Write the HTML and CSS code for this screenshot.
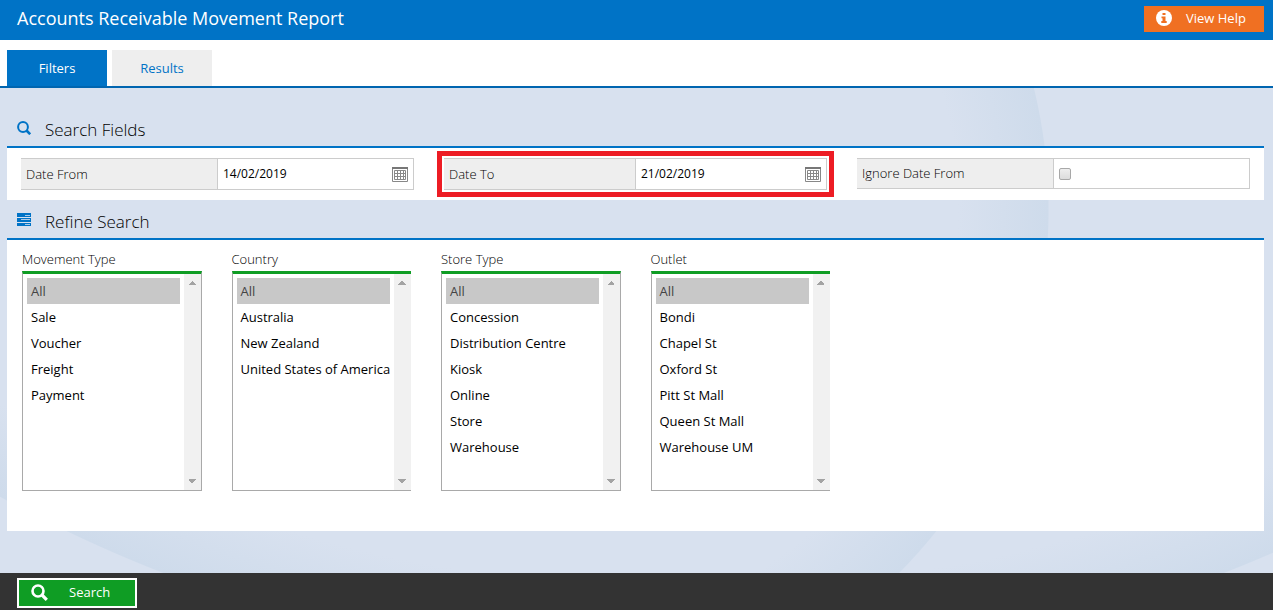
FILE: index.html
```html
<!DOCTYPE html>
<html lang="en">
    <head>
        <meta charset="UTF-8">
        <meta name="viewport" content="width=device-width, initial-scale=1.0">
        <link rel="stylesheet" href="styles.css">
        <title>Accounts Receivable Movement Report</title>
    </head>
    <body>

        <header class="title-bar">
            <h1>Accounts Receivable Movement Report</h1>
            <button type="button" class="help-btn">
                <svg width="16" height="16" viewBox="0 0 16 16"><circle cx="8" cy="8" r="8" fill="#fff"/><path d="M6.5 3h3v2h-3zM5.5 6.5h4v4.5h1.2v2H5.3v-2h1.2V8.200h-1z" fill="#f07022"/></svg>
                <span>View Help</span>
            </button>
        </header>

        <nav class="tabs">
            <a href="#filters" class="tab active">Filters</a>
            <a href="#results" class="tab">Results</a>
        </nav>

        <main id="filters">
            <form id="reportForm">
                <h2>
                    <svg width="14" height="14" viewBox="0 0 14 14" fill="none" stroke="#0073c6"><circle cx="6" cy="6" r="4.900" stroke-width="2"/><path d="M9.500 9.500L13.200 13.200" stroke-width="2.600"/></svg>
                    Search Fields
                </h2>
                <div class="panel fields">
                    <div class="field">
                        <label for="dateFrom">Date From</label>
                        <div class="value">
                            <input type="text" id="dateFrom" name="dateFrom" value="14/02/2019">
                            <button type="button" class="calendar" aria-label="Pick date from">
                                <svg width="16" height="15" viewBox="0 0 16 15"><path d="M.5.5h15v14H.5z" fill="#fff" stroke="#888"/><path d="M0 0h16v2H0z" fill="#777"/><path d="M2.500 3.500h11v9h-11zM5.500 3v10M8.500 3v10M11.500 3v10M2 6.500h12M2 9.500h12" fill="none" stroke="#888"/></svg>
                            </button>
                        </div>
                    </div>
                    <div class="field highlight">
                        <label for="dateTo">Date To</label>
                        <div class="value">
                            <input type="text" id="dateTo" name="dateTo" value="21/02/2019">
                            <button type="button" class="calendar" aria-label="Pick date to">
                                <svg width="16" height="15" viewBox="0 0 16 15"><path d="M.5.5h15v14H.5z" fill="#fff" stroke="#888"/><path d="M0 0h16v2H0z" fill="#777"/><path d="M2.500 3.500h11v9h-11zM5.500 3v10M8.500 3v10M11.500 3v10M2 6.500h12M2 9.500h12" fill="none" stroke="#888"/></svg>
                            </button>
                        </div>
                    </div>
                    <div class="field short">
                        <label for="ignoreDate">Ignore Date From</label>
                        <div class="value">
                            <input type="checkbox" id="ignoreDate" name="ignoreDate">
                        </div>
                    </div>
                </div>

                <h2>
                    <svg width="14" height="14" viewBox="0 0 14 14"><path d="M0 0h14v4H0zM0 5h14v4H0zM0 10h14v3H0z" fill="#0073c6"/><path d="M8 2.500h5M4 6.500h9M8 11.500h5" stroke="#a9cbea"/></svg>
                    Refine Search
                </h2>
                <div class="panel refine">
                    <div class="list">
                        <label for="movementType">Movement Type</label>
                        <select id="movementType" name="movementType" multiple>
                            <option selected>All</option>
                            <option>Sale</option>
                            <option>Voucher</option>
                            <option>Freight</option>
                            <option>Payment</option>
                        </select>
                    </div>
                    <div class="list">
                        <label for="country">Country</label>
                        <select id="country" name="country" multiple>
                            <option selected>All</option>
                            <option>Australia</option>
                            <option>New Zealand</option>
                            <option>United States of America</option>
                        </select>
                    </div>
                    <div class="list">
                        <label for="storeType">Store Type</label>
                        <select id="storeType" name="storeType" multiple>
                            <option selected>All</option>
                            <option>Concession</option>
                            <option>Distribution Centre</option>
                            <option>Kiosk</option>
                            <option>Online</option>
                            <option>Store</option>
                            <option>Warehouse</option>
                        </select>
                    </div>
                    <div class="list">
                        <label for="outlet">Outlet</label>
                        <select id="outlet" name="outlet" multiple>
                            <option selected>All</option>
                            <option>Bondi</option>
                            <option>Chapel St</option>
                            <option>Oxford St</option>
                            <option>Pitt St Mall</option>
                            <option>Queen St Mall</option>
                            <option>Warehouse UM</option>
                        </select>
                    </div>
                </div>
            </form>
        </main>

        <footer class="action-bar">
            <button type="submit" form="reportForm" class="search-btn">
                <svg width="17" height="17" viewBox="0 0 17 17" fill="none" stroke="#fff"><circle cx="7" cy="7" r="5.500" stroke-width="2.600"/><path d="M11 11l4.800 4.800" stroke-width="3.200"/></svg>
                <span>Search</span>
            </button>
        </footer>

    </body>
</html>
```

FILE: styles.css
```css
* {
    box-sizing: border-box;
}

body {
    font-family: 'Open Sans', 'Liberation Sans', sans-serif;
    font-size: 13px;
    color: #000;
    margin: 0;
    min-height: 100vh;
    display: flex;
    flex-direction: column;
}

button,
input,
select {
    font: inherit;
    color: inherit;
}

.title-bar {
    background: #0073c6;
    color: white;
    height: 40px;
    padding: 0 9px 0 17px;
    display: flex;
    align-items: center;
    justify-content: space-between;
}

h1 {
    font-size: 18px;
    font-weight: 400;
    line-height: 24px;
    margin: 0;
    padding-bottom: 4px;
}

.help-btn {
    background: #f07022;
    color: white;
    width: 120px;
    height: 26px;
    margin-top: -2px;
    padding: 0 12px 2px;
    border: none;
    display: flex;
    align-items: center;
    gap: 14px;
    white-space: nowrap;
    cursor: pointer;
}

.tabs {
    display: flex;
    gap: 5px;
    padding: 10px 7px 0;
    background: #fff;
    border-bottom: 2px solid #0065b0;
}

.tab {
    width: 100px;
    line-height: 36px;
    text-align: center;
    text-decoration: none;
    background: #eee;
    color: #0073c6;
}

.tab.active {
    background: #0073c6;
    color: white;
}

/* soft arcs behind the panels */
main {
    flex: 1;
    padding: 24px 9px 42px 7px;
    background:
        radial-gradient(circle 1372px at 89px -793px, rgba(206, 219, 235, 0) 1290px, #cedbeb 1371px, rgba(206, 219, 235, 0) 1372px) right top / 50% 100% no-repeat,
        radial-gradient(circle 516px at -104px 122px, rgba(206, 219, 235, 0) 425px, #cedbeb 515px, rgba(206, 219, 235, 0) 516px) right top / 50% 100% no-repeat,
        radial-gradient(circle 1372px at 661px -793px, rgba(206, 219, 235, 0) 1290px, #cedbeb 1371px, rgba(206, 219, 235, 0) 1372px) left top / 50% 100% no-repeat,
        #d8e1ef;
}

h2 {
    font-size: 17px;
    font-weight: 300;
    line-height: 32px;
    margin: 0;
    padding: 2px 0 0 10px;
    display: flex;
    gap: 14px;
}

h2 svg {
    margin-top: 7px;
}

.panel {
    background: #fff;
    border-top: 2px solid #0073c6;
}

.fields {
    display: grid;
    grid-template-columns: repeat(3, 1fr);
    padding: 10px 0;
    margin-bottom: 4px;
}

.field {
    display: grid;
    grid-template-columns: 1fr 1fr;
    height: 32px;
    margin: 0 12px 0 14px;
    border: 1px solid #ccc;
    border-left: none;
    background: #fff;
}

.field.highlight {
    margin: 0 18px;
    outline: 5px solid #ed1c24;
    outline-offset: 2px;
}

.field.short {
    height: 31px;
    margin: 0 14px 0 12px;
}

.field label {
    background: #eee;
    line-height: 30px;
    padding-left: 5px;
}

.field.short label {
    line-height: 29px;
}

label {
    font-weight: 300;
}

.value {
    border-left: 1px solid #ccc;
    display: flex;
    align-items: center;
    padding: 0 5px;
}

.value input[type="text"] {
    flex: 1;
    min-width: 0;
    padding: 0 0 2px;
    border: none;
    background: none;
    font-size: 12px;
}

.calendar {
    border: none;
    background: none;
    padding: 0;
    display: flex;
    cursor: pointer;
}

.value input[type="checkbox"] {
    appearance: none;
    width: 12px;
    height: 12px;
    margin: 0;
    border: 1px solid #a8a8a8;
    border-radius: 2px;
    background: linear-gradient(#eee, #dcdcdc);
}

.refine {
    display: grid;
    grid-template-columns: repeat(6, 1fr);
    padding: 9px 0 40px;
}

.list {
    padding-left: 15px;
}

.list label {
    display: block;
    line-height: 20px;
    padding-bottom: 2px;
}

/* the track and its two arrows are drawn by the list itself */
select {
    display: block;
    width: 180px;
    height: 220px;
    padding: 4px 21px 4px 4px;
    border: 1px solid #a9a9a9;
    border-top: 3px solid #0f9d24;
    border-radius: 0;
    background:
        conic-gradient(from 135deg at 50% 0, #a3a3a3 90deg, transparent 0) right 5px top 7px / 8px 4px no-repeat,
        conic-gradient(from -45deg at 50% 100%, #a3a3a3 90deg, transparent 0) right 5px bottom 7px / 8px 4px no-repeat,
        linear-gradient(#f1f1f1, #f1f1f1) right top / 17px 100% no-repeat,
        #fff;
    overflow-y: auto;
    scrollbar-width: none;
    outline: none;
}

.list:nth-child(even) select {
    width: 179px;
    border-right: none;
}

option {
    min-height: 26px;
    padding: 4px;
    overflow: visible;
}

option:checked {
    background: #c8c8c8;
    color: #444;
}

.action-bar {
    background: #333;
    padding: 5px 17px 2px;
}

.search-btn {
    background: #0f9d24;
    color: white;
    width: 120px;
    height: 30px;
    padding: 0 12px 2px;
    border: 2px solid #fff;
    display: flex;
    align-items: center;
    gap: 21px;
    cursor: pointer;
}
```
